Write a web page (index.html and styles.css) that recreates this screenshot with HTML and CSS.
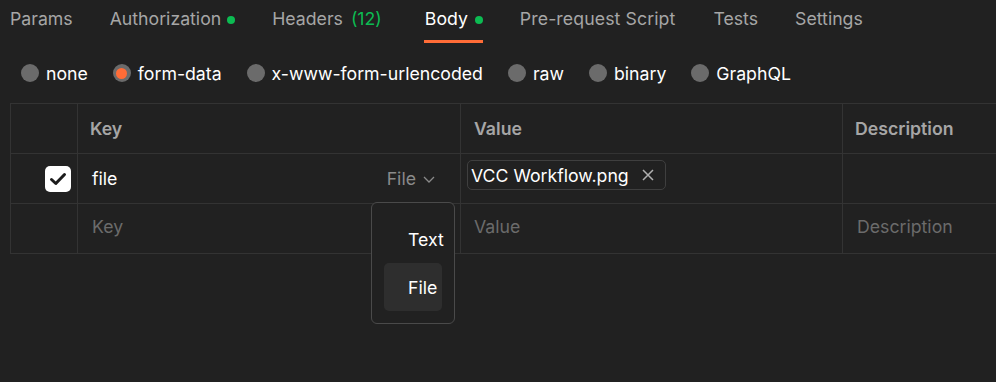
FILE: index.html
```html
<!doctype html>
<html lang="en">
  <head>
    <meta charset="UTF-8" />
    <title>Request Body</title>
    <link rel="stylesheet" href="styles.css">
  </head>
  <body>
    <div class="request">
      <nav class="tabs">
        <div class="tab">Params</div>
        <div class="tab">Authorization <span class="dot"></span></div>
        <div class="tab headers">Headers <span class="count">(12)</span></div>
        <div class="tab active">Body <span class="dot"></span></div>
        <div class="tab wide">Pre-request Script</div>
        <div class="tab">Tests</div>
        <div class="tab">Settings</div>
      </nav>

      <div class="body-types">
        <label class="radio"><span class="circle"></span>none</label>
        <label class="radio selected"><span class="circle"></span>form-data</label>
        <label class="radio"><span class="circle"></span>x-www-form-urlencoded</label>
        <label class="radio"><span class="circle"></span>raw</label>
        <label class="radio"><span class="circle"></span>binary</label>
        <label class="radio"><span class="circle"></span>GraphQL</label>
      </div>

      <div class="table">
        <div class="row head">
          <div class="cell check"></div>
          <div class="cell key">Key</div>
          <div class="cell value">Value</div>
          <div class="cell desc">Description</div>
        </div>
        <div class="row">
          <div class="cell check">
            <span class="checkbox">
              <svg width="26" height="26" viewBox="0 0 26 26">
                <path d="M6.5 13.5 L10.8 17.5 L19.5 8.5" fill="none" stroke="#1c1c1c" stroke-width="3" stroke-linecap="round" stroke-linejoin="round" />
              </svg>
            </span>
          </div>
          <div class="cell key">
            <span class="key-text">file</span>
            <span class="type-select">File
              <svg width="14" height="14" viewBox="0 0 14 14">
                <path d="M2 5 L7 10 L12 5" fill="none" stroke="#8a8a8a" stroke-width="1.3" />
              </svg>
            </span>
            <div class="menu">
              <div class="menu-item">Text</div>
              <div class="menu-item current">File</div>
            </div>
          </div>
          <div class="cell value">
            <span class="chip">VCC Workflow.png
              <svg width="14" height="14" viewBox="0 0 14 14">
                <path d="M2 2 L12 12 M12 2 L2 12" stroke="#b0b0b0" stroke-width="1.5" />
              </svg>
            </span>
          </div>
          <div class="cell desc"></div>
        </div>
        <div class="row">
          <div class="cell check"></div>
          <div class="cell key placeholder">Key</div>
          <div class="cell value placeholder">Value</div>
          <div class="cell desc placeholder">Description</div>
        </div>
      </div>
    </div>
  </body>
</html>
```

FILE: styles.css
```css
body {
  margin: 0;
  padding: 0;
  background: #212121;
  color: #ffffff;
  font-family: "Inter", "Noto Sans", sans-serif;
  font-size: 17.7px;
  -webkit-font-smoothing: antialiased;
}

.request {
  height: 100vh;
  overflow: hidden;
  padding: 0 0 0 10px;
}

/* tab strip */
.tabs {
  display: flex;
  gap: 37px;
  height: 43px;
}

.tab {
  display: flex;
  align-items: flex-start;
  padding-top: 8px;
  color: #a6a6a6;
  white-space: nowrap;
  box-sizing: border-box;
  height: 43px;
  border-bottom: 3px solid transparent;
}

.tab.headers {
  margin-right: 5px;
}

.tab.active {
  color: #ffffff;
  border-bottom-color: #ff6c37;
  padding-left: 1px;
}

.tab.active .dot {
  margin-left: 7px;
}

.tab.wide {
  letter-spacing: 0.1px;
  margin-right: 1px;
}

.dot {
  display: inline-block;
  width: 8px;
  height: 8px;
  border-radius: 50%;
  background: #0cbb52;
  margin: 8px 0 0 6px;
}

.count {
  color: #0cbb52;
  margin-left: 8px;
}

/* body type radios */
.body-types {
  display: flex;
  align-items: center;
  gap: 25px;
  height: 60px;
  padding-left: 11px;
}

.radio {
  display: flex;
  align-items: center;
  gap: 7px;
  color: #ffffff;
}

.circle {
  width: 18px;
  height: 18px;
  border-radius: 50%;
  background: #6b6b6b;
  display: flex;
  align-items: center;
  justify-content: center;
}

.radio.selected .circle::after {
  content: "";
  width: 11px;
  height: 11px;
  border-radius: 50%;
  background: #ff6c37;
}

/* key/value table */
.table {
  width: 1200px;
  border: 1px solid #333333;
  border-right: none;
}

.row {
  display: grid;
  grid-template-columns: 67px 383px 382px 1fr;
  height: 49px;
  border-top: 1px solid #333333;
}

.row.head {
  border-top: none;
}

.cell {
  display: flex;
  align-items: center;
  padding-left: 14px;
  border-right: 1px solid #333333;
}

.head .cell {
  font-weight: 600;
  color: #a6a6a6;
  padding-left: 12px;
}

.cell.check {
  justify-content: flex-end;
  padding: 0 6px 0 0;
}

.checkbox {
  width: 26px;
  height: 26px;
  border-radius: 5px;
  background: #ffffff;
  display: flex;
}

.cell.key {
  position: relative;
  justify-content: space-between;
  padding-right: 24px;
}

.type-select {
  display: flex;
  align-items: center;
  gap: 6px;
  color: #8a8a8a;
}

.cell.value {
  padding-left: 6px;
}

.placeholder.value,
.head .value {
  padding-left: 13px;
}

.chip {
  display: flex;
  align-items: center;
  align-self: flex-start;
  gap: 12px;
  height: 28px;
  margin-top: 6px;
  padding: 0 10px 0 3px;
  border: 1px solid #3f3f3f;
  border-radius: 5px;
  color: #ffffff;
}

.placeholder {
  color: #6b6b6b;
  padding-bottom: 4px;
}

/* type dropdown */
.menu {
  position: absolute;
  left: 293px;
  top: 48px;
  width: 58px;
  padding: 12px;
  background: #212121;
  border: 1px solid #4a4a4a;
  border-radius: 6px;
  z-index: 2;
}

.menu-item {
  height: 48px;
  display: flex;
  align-items: center;
  padding-left: 24px;
  border-radius: 5px;
  color: #ffffff;
}

.menu-item.current {
  background: #2e2e2e;
}
```
